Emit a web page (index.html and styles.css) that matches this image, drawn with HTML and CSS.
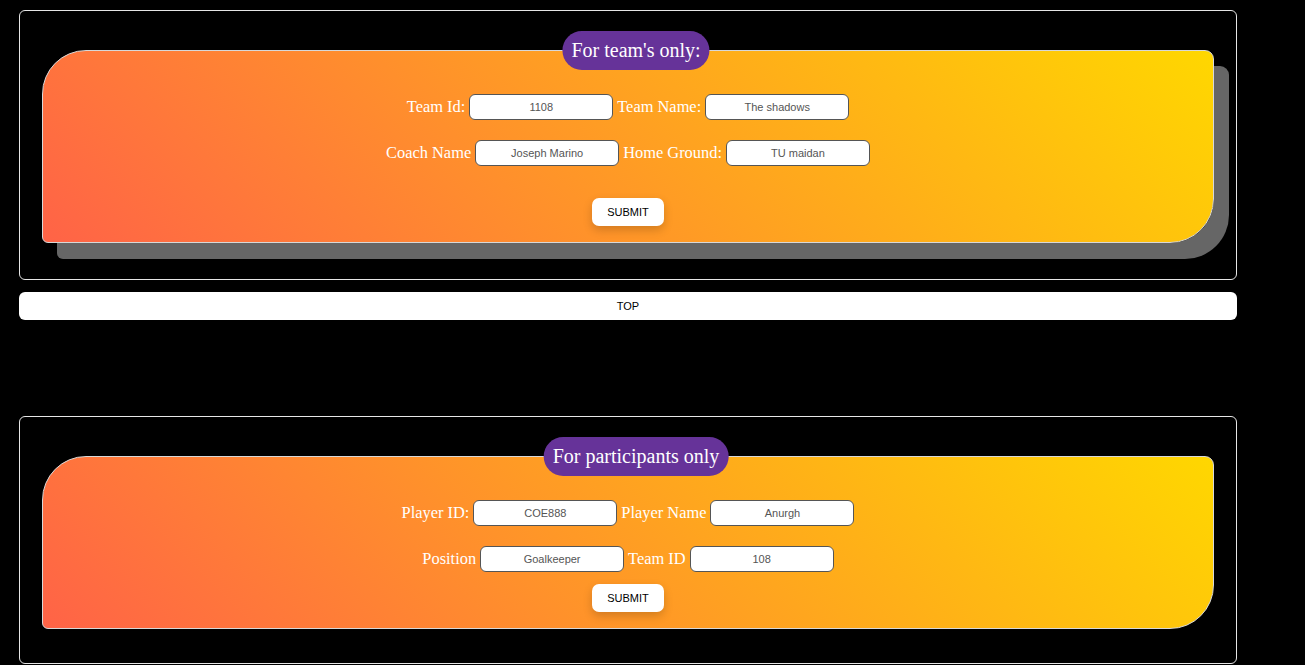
FILE: index.html
```html
<!DOCTYPE html>
<html>
<head>
<meta charset="utf-8">
<title>Teams and participants</title>
<link rel="stylesheet" href="styles.css">
</head>
<body>
  <section class="box box-team">
    <form class="card card-shadow">
      <span class="legend">For team's only:</span>
      <div class="row">
        <label class="lbl">Team Id:</label>
        <input class="field" type="text" value="1108">
        <label class="lbl">Team Name:</label>
        <input class="field" type="text" value="The shadows">
      </div>
      <div class="row">
        <label class="lbl">Coach Name</label>
        <input class="field" type="text" value="Joseph Marino">
        <label class="lbl">Home Ground:</label>
        <input class="field" type="text" value="TU maidan">
      </div>
      <div class="actions actions-wide">
        <button class="submit" type="button">SUBMIT</button>
      </div>
    </form>
  </section>

  <button class="top-bar" type="button">TOP</button>

  <section class="box box-players">
    <form class="card">
      <span class="legend">For participants only</span>
      <div class="row">
        <label class="lbl">Player ID:</label>
        <input class="field" type="text" value="COE888">
        <label class="lbl">Player Name</label>
        <input class="field" type="text" value="Anurgh">
      </div>
      <div class="row">
        <label class="lbl">Position</label>
        <input class="field" type="text" value="Goalkeeper">
        <label class="lbl">Team ID</label>
        <input class="field" type="text" value="108">
      </div>
      <div class="actions">
        <button class="submit" type="button">SUBMIT</button>
      </div>
    </form>
  </section>
</body>
</html>
```

FILE: styles.css
```css
html, body {
  background: #000;
}
body {
  margin: 0;
  padding: 10px 0 0 19px;
  font-family: "Liberation Serif", "Times New Roman", serif;
}

.box {
  width: 1218px;
  box-sizing: border-box;
  border: 1px solid #e6e6e6;
  border-radius: 6px;
  padding: 39px 22px 36px;
}
.box-players {
  margin-top: 96px;
  padding-bottom: 34px;
}

.card {
  position: relative;
  margin: 0;
  box-sizing: border-box;
  border: 1px solid #d8d8d8;
  border-radius: 44px 9px 44px 6px;
  background: linear-gradient(45deg, #ff6347, #ffd700);
  padding: 43px 0 16px;
  display: flex;
  flex-direction: column;
  align-items: center;
}
.card-shadow {
  box-shadow: 15px 16px 0 #666;
}

.legend {
  position: absolute;
  top: -20px;
  left: 50%;
  transform: translateX(-50%);
  margin-left: 8px;
  background: #663399;
  color: #fff;
  font-size: 20px;
  line-height: 23px;
  padding: 8px 9px;
  border-radius: 20px;
  white-space: nowrap;
}

.row {
  display: flex;
  align-items: center;
  justify-content: center;
  gap: 4px;
  height: 26px;
}
.row + .row {
  margin-top: 20px;
}

.lbl {
  color: #fff;
  font-size: 16.4px;
  white-space: nowrap;
}

.field {
  width: 144px;
  height: 26px;
  box-sizing: border-box;
  border: 1px solid #555;
  border-radius: 6px;
  background: #fff;
  font-family: "Liberation Sans", Arial, sans-serif;
  font-size: 11px;
  color: #555;
  text-align: center;
  padding: 0 4px;
  margin: 0;
}

.actions {
  margin-top: 12px;
}
.actions-wide {
  margin-top: 32px;
}

.submit {
  width: 72px;
  height: 28px;
  border: none;
  border-radius: 7px;
  background: #fff;
  color: #000;
  font-family: "Liberation Sans", Arial, sans-serif;
  font-size: 11px;
  box-shadow: 0 4px 10px rgba(0, 0, 0, 0.18);
  padding: 0;
}

.top-bar {
  display: block;
  width: 1218px;
  height: 28px;
  margin-top: 12px;
  border: none;
  border-radius: 6px;
  background: #fff;
  color: #000;
  font-family: "Liberation Sans", Arial, sans-serif;
  font-size: 11px;
  padding: 0;
}
```
